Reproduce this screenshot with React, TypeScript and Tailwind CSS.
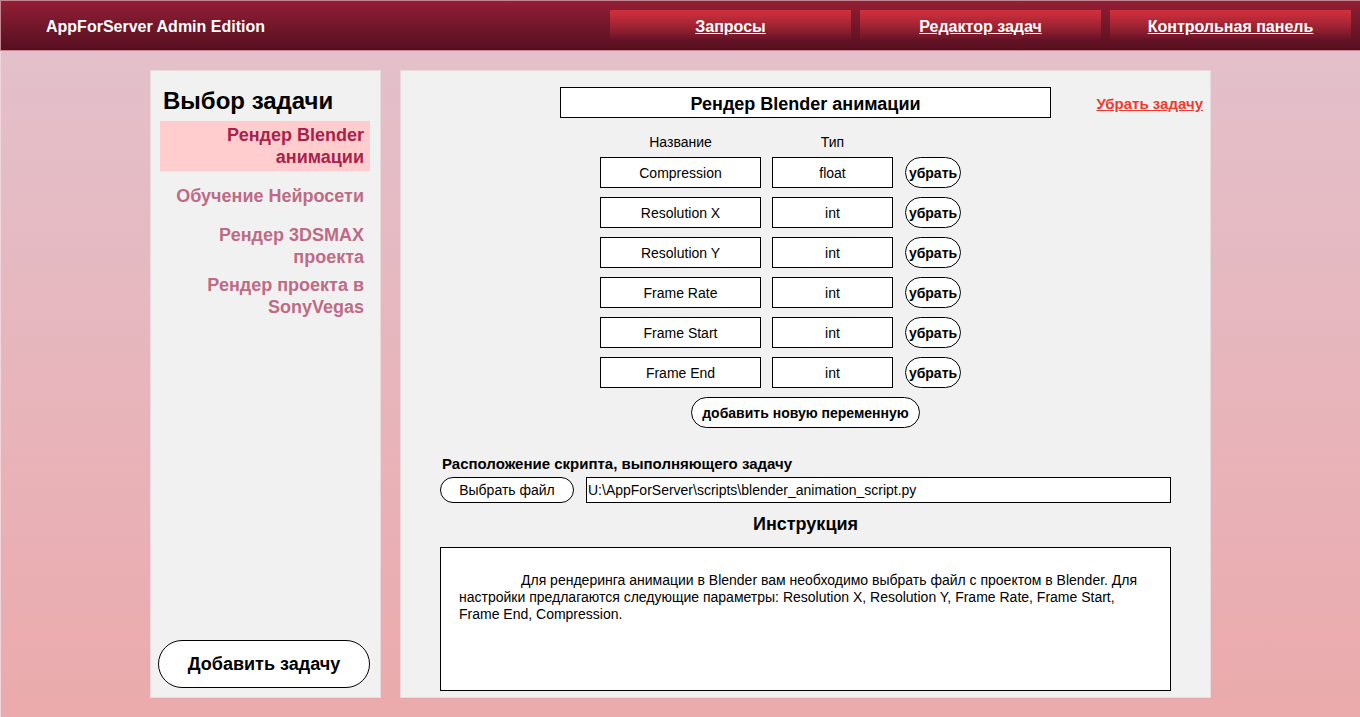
import { useState } from "react";

type Variable = { name: string; type: string };

const NAV_LINKS = ["Запросы", "Редактор задач", "Контрольная панель"];

const TASKS = [
  "Рендер Blender анимации",
  "Обучение Нейросети",
  "Рендер 3DSMAX проекта",
  "Рендер проекта в SonyVegas",
];

const VARIABLES: Variable[] = [
  { name: "Compression", type: "float" },
  { name: "Resolution X", type: "int" },
  { name: "Resolution Y", type: "int" },
  { name: "Frame Rate", type: "int" },
  { name: "Frame Start", type: "int" },
  { name: "Frame End", type: "int" },
];

const INSTRUCTION =
  "Для рендеринга анимации в Blender вам необходимо выбрать файл с проектом в Blender. Для настройки предлагаются следующие параметры: Resolution X, Resolution Y, Frame Rate, Frame Start, Frame End, Compression.";

function Header() {
  return (
    <header className="flex h-[51px] items-start justify-between border-y border-l border-[#c58693] bg-linear-to-b from-[#931f36] to-[#560f20] pt-[9px] pr-[9px] pl-[45px] text-base font-bold text-white">
      <div className="flex h-[34px] items-center whitespace-nowrap">AppForServer Admin Edition</div>
      <nav className="flex gap-[9px]">
        {NAV_LINKS.map((label) => (
          <a
            key={label}
            href="#"
            className="flex h-[34px] w-[241px] items-center justify-center bg-linear-to-b from-[#d0303c] to-transparent to-90% whitespace-nowrap underline"
          >
            {label}
          </a>
        ))}
      </nav>
    </header>
  );
}

function Sidebar({ selected, onSelect }: { selected: number; onSelect: (i: number) => void }) {
  return (
    <aside className="flex w-[231px] shrink-0 flex-col border border-[#eadadf] bg-[#f1f1f1] pt-[14px] pb-[9px]">
      <h2 className="mb-1 pl-3 text-2xl font-bold">Выбор задачи</h2>
      <ul className="flex flex-col pr-[10px] pl-[9px]">
        {TASKS.map((task, i) => (
          <li key={task}>
            <button
              type="button"
              onClick={() => onSelect(i)}
              className={
                i === selected
                  ? "flex h-[50px] w-full items-center justify-end bg-[#ffcdce] pr-[6px] pl-3 text-right text-lg leading-[22px] font-bold text-[#a8224a]"
                  : "flex h-[50px] w-full items-center justify-end pr-[6px] pl-3 text-right text-lg leading-[22px] font-bold text-[#be6b85]"
              }
            >
              {task}
            </button>
          </li>
        ))}
      </ul>
      <button
        type="button"
        className="mt-auto mr-[10px] ml-[7px] h-12 rounded-full border border-black bg-white text-lg font-bold"
      >
        Добавить задачу
      </button>
    </aside>
  );
}

function VariableTable() {
  return (
    <table className="mr-[50px] self-center text-sm">
      <thead>
        <tr className="h-[39px]">
          <th className="pt-[9px] pr-[11px] font-normal">Название</th>
          <th className="pt-[9px] pr-3 font-normal">Тип</th>
          <td />
        </tr>
      </thead>
      <tbody>
        {VARIABLES.map((v) => (
          <tr key={v.name} className="h-10">
            <td className="p-0 pr-[11px] align-top">
              <input
                aria-label="Название"
                defaultValue={v.name}
                className="block h-[31px] w-[161px] border border-black bg-white text-center"
              />
            </td>
            <td className="p-0 pr-3 align-top">
              <input
                aria-label="Тип"
                defaultValue={v.type}
                className="block h-[31px] w-[121px] border border-black bg-white text-center"
              />
            </td>
            <td className="p-0 align-top">
              <button
                type="button"
                className="flex h-[31px] w-14 items-center justify-center rounded-full border border-black bg-white font-bold"
              >
                убрать
              </button>
            </td>
          </tr>
        ))}
      </tbody>
    </table>
  );
}

function TaskEditor() {
  return (
    <main className="flex min-w-0 flex-1 flex-col border border-[#eadadf] bg-[#f1f1f1] pt-4 pb-[6px]">
      <div className="grid grid-cols-[1fr_491px_1fr] items-center">
        <input
          aria-label="Название задачи"
          defaultValue="Рендер Blender анимации"
          className="col-start-2 h-[31px] border border-black bg-white pt-1 text-center text-lg font-bold"
        />
        <a href="#" className="justify-self-end pt-[3px] pr-[7px] text-[15px] font-bold whitespace-nowrap text-[#f03a30] underline">
          Убрать задачу
        </a>
      </div>

      <VariableTable />

      <button
        type="button"
        className="h-[31px] w-[229px] self-center rounded-full border border-black bg-white text-sm font-bold whitespace-nowrap"
      >
        добавить новую переменную
      </button>

      <div className="flex flex-1 flex-col px-[39px] pt-6">
        <label htmlFor="script-path" className="pb-0.5 pl-[2px] text-[15px] leading-[23px] font-bold">
          Расположение скрипта, выполняющего задачу
        </label>
        <div className="flex gap-3">
          <button type="button" className="h-[26px] w-[134px] rounded-full border border-black bg-white text-sm">
            Выбрать файл
          </button>
          <input
            id="script-path"
            defaultValue="U:\AppForServer\scripts\blender_animation_script.py"
            className="h-[26px] min-w-0 flex-1 border border-black bg-white px-px text-sm"
          />
        </div>
        <label htmlFor="instruction" className="pb-0.5 text-center text-lg leading-[42px] font-bold">
          Инструкция
        </label>
        <textarea
          id="instruction"
          defaultValue={INSTRUCTION}
          className="min-h-36 flex-1 resize-none overflow-hidden border border-black bg-white px-[18px] pt-6 indent-[62px] text-sm leading-[17px]"
        />
      </div>
    </main>
  );
}

export default function App() {
  const [selected, setSelected] = useState(0);
  return (
    <div className="flex min-h-screen flex-col bg-[#e3c0cb] font-['Liberation_Sans',Arial,sans-serif] text-black">
      <Header />
      <div className="flex flex-1 gap-[19px] border-l border-[#efd6dc] bg-linear-to-b from-[#e3c0cb] to-[#ebaaac] pt-[19px] pr-[149px] pb-[19px] pl-[149px]">
        <Sidebar selected={selected} onSelect={setSelected} />
        <TaskEditor />
      </div>
    </div>
  );
}
